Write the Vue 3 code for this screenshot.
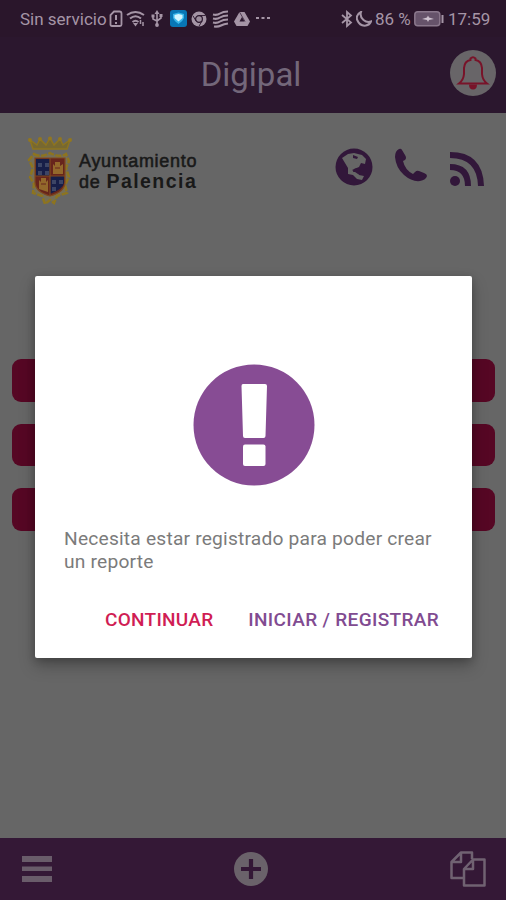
<script setup>
const actions = ['reportes', 'noticias', 'agenda']
</script>

<template>
  <div class="screen">
    <div class="status">
      <span class="carrier">Sin servicio</span>
      <svg class="sim" width="14" height="18" viewBox="0 0 14 18"><path d="M5 1.5H10.5Q12.5 1.5 12.5 3.5V14.5Q12.5 16 11 16H3Q1.5 16 1.5 14.5V5Z" fill="none" stroke="currentColor" stroke-width="1.8"/><path d="M7 5V10M7 12V14" stroke="currentColor" stroke-width="2"/></svg>
      <svg class="wifi" width="20" height="18" viewBox="0 0 20 18"><g fill="none" stroke="currentColor" stroke-width="2"><path d="M1 5Q9.500-1 18 5M4 8.500Q9.500 4 15 8.500M6.500 12Q9.500 9.500 12.500 12"/></g><path d="M7 13H12L9.500 16.500Z" fill="currentColor"/><path d="M14.500 10V14M17 12V16" stroke="currentColor" stroke-width="1.500"/></svg>
      <svg class="usb" width="12" height="18" viewBox="0 0 12 18"><path d="M6 2V15M2 6V9L6 11L10 8V5" fill="none" stroke="currentColor" stroke-width="1.6"/><path d="M6 0L8.500 4H3.500ZM.5 4.500H3.500V7.500H.5ZM8.500 4H11.500V7H8.500Z" fill="currentColor"/><circle cx="6" cy="15" r="1.900" fill="currentColor"/></svg>
      <svg class="app" width="17" height="17" viewBox="0 0 17 17"><rect width="17" height="17" rx="3" fill="#0876b5"/><path d="M3 4L8.500 2.500L14 4V8Q13 11 8.500 14Q4 11 3 8Z" fill="#38b6ea"/><path d="M4.500 5L8.500 4L12.500 5V8L8.500 11.500L4.500 8Z" fill="#d2f5ff"/></svg>
      <svg class="chrome" width="16" height="16" viewBox="0 0 16 16"><circle cx="8" cy="8" r="7.500" fill="currentColor"/><circle cx="8" cy="8" r="3.400" fill="#9c8d9d" stroke="#2b172e" stroke-width="1.200"/><path d="M8 4.500H14.500M5 10L2 4.800M11 10L8 15.200" stroke="#2b172e" stroke-width=".9"/></svg>
      <svg class="waves" width="17" height="18" viewBox="0 0 17 18"><path d="M1 4.500Q5 5.500 8 3.500T16 1.500M1 8.500Q5 9.500 8 7.500T16 5.500M1 12.500Q5 13.500 8 11.500T16 9.500M2 16.500Q6 17 9 15.500T16 13.500" fill="none" stroke="currentColor" stroke-width="2.100"/></svg>
      <svg class="drive" width="16" height="16" viewBox="0 0 16 16"><path d="M5.500 1H10.500L16 10.500L13.500 15H2.500L0 10.500Z" fill="currentColor"/><path d="M8 6L5.500 10.500H10.500Z" fill="#2b172e"/><path d="M5.500 1L11 10.500" stroke="#2b172e" stroke-width=".7"/></svg>
      <svg class="dots" width="14" height="4" viewBox="0 0 14 4"><path d="M0 0H3V2H0ZM5.500 0H8.500V2H5.500ZM11 0H14V2H11Z" fill="currentColor"/></svg>
      <svg class="bt" width="12" height="18" viewBox="0 0 12 18"><path d="M1 5L10 12.500L6 16V2L10 5.500L1 13" fill="none" stroke="currentColor" stroke-width="1.800"/></svg>
      <svg class="moon" width="16" height="16" viewBox="0 0 16 16"><path d="M5 1Q-.5 4 1.200 9Q4 15.500 10 14.500Q13.500 14 15 10.500Q11 12 7.500 9Q3.500 5.500 5 1Z" fill="none" stroke="currentColor" stroke-width="2"/></svg>
      <span class="percent">86 %</span>
      <svg class="battery" width="30" height="16" viewBox="0 0 30 16"><rect x=".8" y=".8" width="25" height="14" rx="3" fill="#66536a" stroke="#8a788c" stroke-width="1.500"/><path d="M28.500 4V12" stroke="currentColor" stroke-width="2"/><path d="M8 8L13 6.500L14 4.500L15 6.500L20 8L15 9L14 11L13 9Z" fill="#cfc3d0"/></svg>
      <span class="clock">17:59</span>
    </div>
    <header class="titlebar">
      <h1>Digipal</h1>
      <svg class="bell" width="48" height="48" viewBox="0 0 48 48"><circle cx="24" cy="24" r="23" fill="#686568"/><path d="M10 34.500Q14.500 31 15 25V19Q15.500 12 21.500 11V9.500Q24 7 26.500 9.500V11Q32.500 12 33 19V25Q33.500 31 38 34.500Z" fill="none" stroke="#781329" stroke-width="2"/><path d="M20 35.500H28Q28 40.500 24 40.500T20 35.500Z" fill="#781329"/></svg>
    </header>
    <section class="brand">
      <svg class="crest" width="48" height="72" viewBox="0 0 48 72">
        <path d="M7 13L4 4L11 9L14 3L20 9L24 2L28 9L34 3L37 9L44 4L41 13Z" fill="#776831" stroke="#8d741f" stroke-width="1.500"/>
        <g fill="#927720"><circle cx="4" cy="4" r="2"/><circle cx="14" cy="3" r="2"/><circle cx="24" cy="2.500" r="2"/><circle cx="34" cy="3" r="2"/><circle cx="44" cy="4" r="2"/></g>
        <path d="M8 18Q14 22 24 17Q34 22 40 18L43 25L40 32L43 41L39 49L41 57L31 60L28 67L24 64L19 68L16 60L7 57L8 48L4 41L7 32L3 24Z" fill="#756e57" stroke="#8d741f" stroke-width="2.500" stroke-dasharray="6 1.500"/>
        <path d="M9 22H39V46Q39 56 24 60Q9 56 9 46Z" fill="#67251c"/><path d="M10 23H24V40H10ZM24 40H38V47Q37 53 24 58Z" fill="#171e48"/>
        <path d="M12 27H16V31H12ZM19 27H23V31H19ZM12 35H16V39H12ZM19 35H23V39H19ZM26 44H30V48H26ZM33 44H37V48H33ZM26 51H30V55H26Z" fill="#3d4565"/>
        <path d="M27 38V28L29 30V26H34V30L37 28V38ZM13 53V44L15 46V42H20V46L22 44V56Z" fill="#93682b"/><path d="M29 32H34M15 48H20" stroke="#67251c"/>
        <path d="M9 22H39V46Q39 56 24 60Q9 56 9 46ZM24 22V59M9 40H39" fill="none" stroke="#80491f" stroke-width="1.200"/>
      </svg>
      <div class="brandname"><span class="top">Ayuntamiento</span><span class="bottom">de <b>Palencia</b></span></div>
      <svg class="globe" width="38" height="38" viewBox="0 0 38 38"><circle cx="19" cy="19" r="18.500" fill="#32173a"/><path d="M7 10L13 6L19 5L27 7L31 11L30 16L26 15L24 19L19 21L18 24L22 24L24 27L29 28L27 32L22 31L18 27L13 26L13 20L10 15Z" fill="#666"/><path d="M18 7L23 9L22 11L18 10ZM17 22L22 20L26 23L23 26Z" fill="#32173a"/></svg>
      <svg class="phone" width="34" height="36" viewBox="0 0 34 36"><path d="M5 1Q1 3 1 9Q2 20 10 27Q18 34 26 33Q32 32 33 28Q33 26 30 25L25 23Q23 22 21 24L19 26Q11 22 9 13L11 12Q13 10 11 7L8 2Q7 0 5 1Z" fill="#32173a"/></svg>
      <svg class="rss" width="36" height="36" viewBox="0 0 36 36"><g fill="none" stroke="#32173a" stroke-width="6"><path d="M1 4Q31 4 32 35M1 16Q19 16 19 35"/></g><circle cx="6" cy="30" r="5" fill="#32173a"/></svg>
    </section>
    <main class="actions">
      <div v-for="action in actions" :key="action" class="action"></div>
    </main>
    <nav class="bottom-nav">
      <svg width="30" height="26" viewBox="0 0 30 26"><path d="M0 0H30V6H0ZM0 10.500H30V15H0ZM0 20H30V26H0Z" fill="#695c6a"/></svg>
      <svg width="34" height="34" viewBox="0 0 34 34"><circle cx="17" cy="17" r="17" fill="#6a626a"/><path d="M17 7V27M7 17H27" stroke="#341836" stroke-width="4.200"/></svg>
      <svg width="36" height="36" viewBox="0 0 36 36"><g fill="none" stroke="#706272" stroke-width="2.500" stroke-linejoin="round"><path d="M13 27H1.500V11L11 1.500H22V8M11 2V11H2"/><path d="M14 18L23 8.500H34.500V34.500H14ZM23 9V18H14"/></g></svg>
    </nav>
    <div class="dialog" role="dialog">
      <svg class="alert" width="122" height="122" viewBox="0 0 122 122"><circle cx="61" cy="61" r="60.500" fill="#874c94"/><path d="M50 20H72Q74 20 74 22L72.500 72Q72.500 74 70.500 74H52Q50 74 50 72L48.500 22Q48.500 20 50 20Z" fill="#fff"/><rect x="50" y="80.500" width="22.500" height="21.500" rx="2" fill="#fff"/></svg>
      <p>Necesita estar registrado para poder crear<br>un reporte</p>
      <div class="buttons"><button class="continue">CONTINUAR</button><button class="register">INICIAR / REGISTRAR</button></div>
    </div>
  </div>
</template>

<style>
body { margin: 0; background: #666; }
</style>
<style scoped>
.screen { position: relative; width: 506px; height: 900px; display: flex; flex-direction: column; overflow: hidden; background: #666; font-family: Roboto, "Liberation Sans", sans-serif; }
svg { display: block; flex-shrink: 0; }
.status { height: 37px; flex-shrink: 0; box-sizing: border-box; padding-left: 20px; display: flex; align-items: center; background: #2a162b; color: #a595a6; font-size: 17px; white-space: nowrap; }
.carrier { width: 86px; }
.sim { margin-left: 3px; }
.wifi { margin-left: 3px; }
.usb { margin-left: 5px; }
.app { margin-left: 7px; }
.chrome { margin-left: 4px; }
.waves { margin-left: 5px; }
.drive { margin-left: 5px; }
.dots { margin-left: 6px; }
.bt { margin-left: 71px; }
.moon { margin-left: 3px; }
.percent { width: 35px; margin-left: 3px; }
.battery { margin-left: 4px; }
.clock { margin-left: 4px; }
.titlebar { height: 76px; flex-shrink: 0; display: grid; grid-template-columns: 1fr auto 1fr; align-items: center; background: #2b172e; }
h1 { grid-column: 2; margin: 0 0 0 -4px; font-size: 33px; line-height: 38px; font-weight: 400; color: #73677a; }
.bell { justify-self: end; margin-right: 9px; margin-top: -4px; }
.brand { height: 112px; flex-shrink: 0; display: flex; padding-left: 26px; }
.crest { margin-top: 23px; }
.brandname { width: 120px; margin: 38px 0 0 5px; display: flex; flex-direction: column; font-family: "Liberation Sans", sans-serif; color: #191919; font-size: 18px; line-height: 20px; white-space: nowrap; -webkit-text-stroke: .55px #191919; }
.top { letter-spacing: .7px; }
.bottom { letter-spacing: .8px; }
.bottom b { font-size: 19.500px; letter-spacing: 1.450px; -webkit-text-stroke: 0; }
.globe { margin: 35px 0 0 136px; }
.phone { margin: 35px 0 0 21px; }
.rss { margin: 38px 0 0 21px; }
.actions { flex: 1; display: flex; flex-direction: column; gap: 22px; padding: 134px 11px 0 12px; }
.action { height: 42.500px; border-radius: 9px; background: #560724; }
.bottom-nav { height: 62px; flex-shrink: 0; box-sizing: border-box; padding: 0 20px 0 22px; display: flex; justify-content: space-between; align-items: center; background: #341836; }
.dialog { position: absolute; top: 276px; left: 35px; width: 437px; height: 382px; box-sizing: border-box; padding: 88px 29px 0; border-radius: 2px; background: #fff; box-shadow: 0 8px 16px rgba(0,0,0,.25), 0 2px 8px rgba(0,0,0,.2); display: flex; flex-direction: column; }
.alert { margin-left: 129px; }
p { margin: 41px 0 0; color: #7b7b7b; font-size: 19.200px; line-height: 23px; letter-spacing: .2px; white-space: nowrap; }
.buttons { display: flex; justify-content: space-between; margin: 35px 4px 0 41px; }
button { border: 0; padding: 0; background: transparent; font: 500 19px/24px Roboto, sans-serif; white-space: nowrap; }
.continue { color: #d01d54; letter-spacing: .28px; }
.register { color: #814b91; letter-spacing: .34px; }
</style>
